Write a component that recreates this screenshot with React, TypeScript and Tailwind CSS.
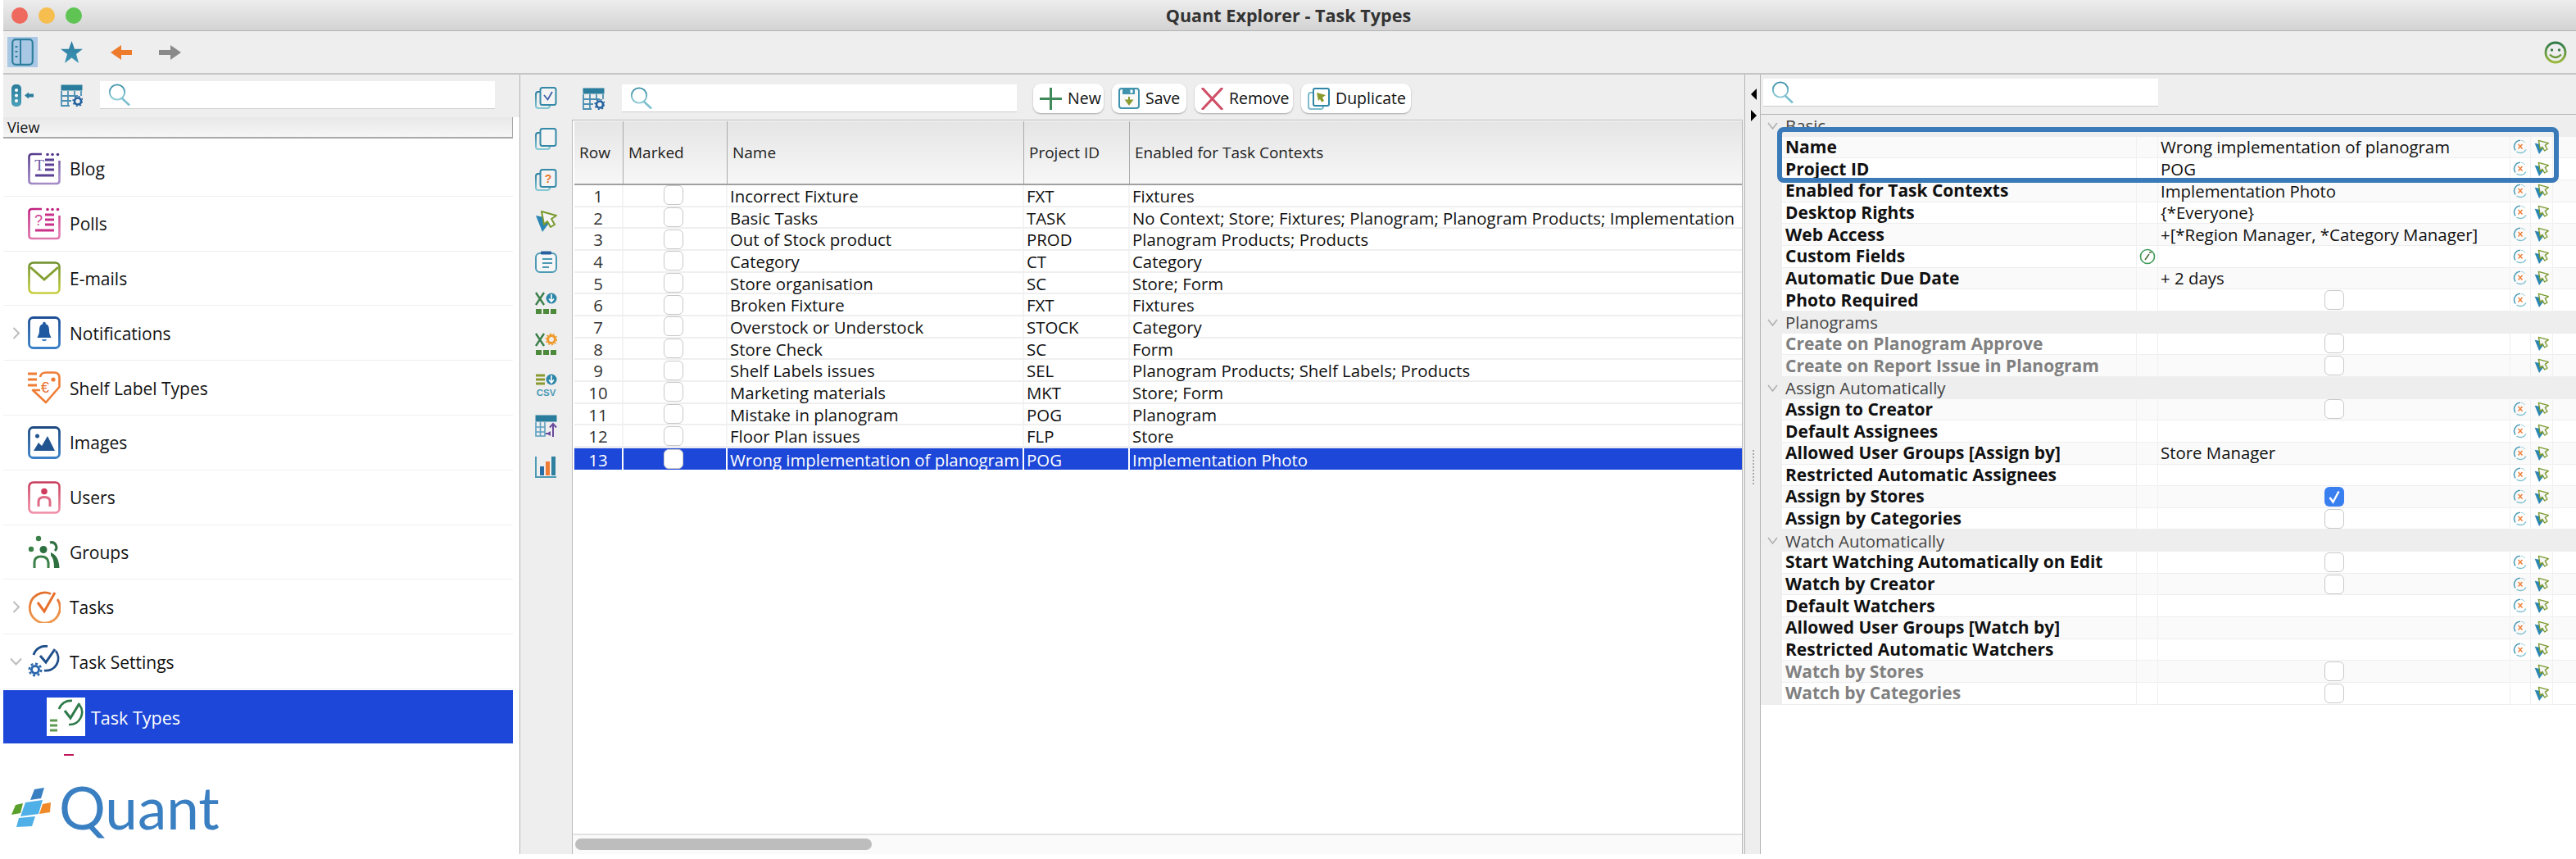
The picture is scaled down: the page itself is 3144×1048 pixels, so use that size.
import React from 'react';

function Grad({ id, a, b, x2 = 0, y2 = 1 }: { id: string; a: string; b: string; x2?: number; y2?: number }) {
  return (
    <linearGradient id={id} x1="0" y1="0" x2={x2} y2={y2}>
      <stop offset="0" stopColor={a} />
      <stop offset="1" stopColor={b} />
    </linearGradient>
  );
}

function Search() {
  return (
    <svg width="27" height="27" viewBox="0 0 27 27" fill="none" className="shrink-0">
      <defs><Grad id="sg" a="#3b8fa8" b="#8ccad6" /></defs>
      <circle cx="11" cy="10.5" r="9.2" stroke="url(#sg)" strokeWidth="1.8" />
      <path d="M17 18 L26 26.5" stroke="#7cc0cf" strokeWidth="2.6" />
    </svg>
  );
}

function SearchBox() {
  return (
    <div className="w-[482px] h-[34px] bg-white border-b border-[#cfcfcf] flex items-center pl-[10px] shrink-0">
      <Search />
    </div>
  );
}

function TableGear({ children }: { children?: React.ReactNode }) {
  return (
    <svg width="27" height="27" viewBox="0 0 27 27" fill="none" className="shrink-0">
      <rect x="0.5" y="0.5" width="26" height="7" fill="#2a7c9c" />
      <path d="M1 8v18h10M1 14h20M1 20h12M9 8v18M17 8v7M25 8v6" stroke="#4a8fb3" strokeWidth="1.8" />
      {children}
      <circle cx="21" cy="20.5" r="4" stroke="#1f5f9e" strokeWidth="2.6" fill="#eee" />
      <circle cx="21" cy="20.5" r="6" stroke="#1f5f9e" strokeWidth="1.4" strokeDasharray="2 2.7" />
    </svg>
  );
}

function PageStack({ children }: { children?: React.ReactNode }) {
  return (
    <svg width="27" height="27" viewBox="0 0 27 27" fill="none">
      <defs><Grad id="ps" a="#2a7f9f" b="#85c8d4" /></defs>
      <rect x="1" y="6" width="17" height="20" rx="3" stroke="url(#ps)" strokeWidth="2" fill="#eee" />
      <rect x="6.5" y="1" width="19" height="21" rx="2.5" stroke="#3489a8" strokeWidth="2" fill="#f4f4f4" />
      {children}
    </svg>
  );
}

function Cursor({ size = 27 }: { size?: number }) {
  return (
    <svg width={size} height={size} viewBox="0 0 27 27" fill="none" className="shrink-0">
      <path d="M1 7 L9 27 L18 15 L11 9 Z" fill="#2c86b4" />
      <path d="M8 2 L26 7 L20 11 L24 18 L19 21 L15 14 L11 18 Z" fill="#f6f6f6" stroke="#7a9a2e" strokeWidth="2" strokeLinejoin="round" />
    </svg>
  );
}

function Reset() {
  return (
    <svg width="18" height="18" viewBox="0 0 18 18" fill="none" className="shrink-0">
      <path d="M9 1.2 A7.8 7.8 0 0 0 3 13.5" stroke="#4a9ab5" strokeWidth="1.5" />
      <path d="M4.5 15 A7.8 7.8 0 0 0 16 12.5" stroke="#7fc0cf" strokeWidth="1.5" />
      <path d="M6.5 6 L11.5 11.5 M11.5 6 L6.5 11.5" stroke="#ef7d35" strokeWidth="1.4" />
      <path d="M10 1.3 A7.8 7.8 0 0 1 15 4" stroke="#9fd0da" strokeWidth="1" />
    </svg>
  );
}

function ExcelBars() {
  return (
    <g fill="#4e8a3c">
      <rect x="1" y="21" width="7" height="6" />
      <rect x="10" y="21" width="7" height="6" />
      <rect x="19" y="21" width="7" height="6" />
    </g>
  );
}

const stripIcons: React.ReactNode[] = [
  <PageStack key="a"><path d="M11 10 L15.5 15.5 L21 6" stroke="#3d5fa8" strokeWidth="1.8" /></PageStack>,
  <PageStack key="b" />,
  <PageStack key="c"><text x="16" y="17" textAnchor="middle" fontSize="14" fontWeight="700" fill="#e8762c" fontFamily="'Liberation Sans',sans-serif">?</text></PageStack>,
  <Cursor key="d" />,
  <svg key="e" width="27" height="27" viewBox="0 0 27 27" fill="none">
    <rect x="1" y="3" width="25" height="23" rx="5" stroke="#4a9ab5" strokeWidth="2" fill="#f6f6f6" />
    <rect x="7" y="0.5" width="13" height="4" rx="1" fill="#2a5f9f" />
    <path d="M9 10h12M9 15h12M9 20h8" stroke="#4a9ab5" strokeWidth="2" />
  </svg>,
  <svg key="f" width="27" height="27" viewBox="0 0 27 27" fill="none">
    <path d="M1 1 L11 16 M11 1 L1 16" stroke="#3b7f4a" strokeWidth="2.4" />
    <circle cx="20" cy="8" r="6.5" fill="#2c86a8" />
    <path d="M20 3v8M17 8.5l3 3.5 3-3.5" stroke="#fff" strokeWidth="1.6" />
    <ExcelBars />
  </svg>,
  <svg key="g" width="27" height="27" viewBox="0 0 27 27" fill="none">
    <path d="M1 1 L11 16 M11 1 L1 16" stroke="#3b7f4a" strokeWidth="2.4" />
    <circle cx="20" cy="8" r="4.4" stroke="#ef9a2c" strokeWidth="3" />
    <circle cx="20" cy="8" r="6.6" stroke="#ef9a2c" strokeWidth="1.6" strokeDasharray="2 2.1" />
    <ExcelBars />
  </svg>,
  <svg key="h" width="27" height="27" viewBox="0 0 27 27" fill="none">
    <path d="M1 2h11M1 7h11M1 12h11" stroke="#8a9a2e" strokeWidth="3" />
    <circle cx="20" cy="7" r="6.5" fill="#2c86a8" />
    <path d="M20 2v8M17 7.5l3 3.5 3-3.5" stroke="#fff" strokeWidth="1.6" />
    <text x="13.5" y="26.5" textAnchor="middle" fontSize="11.5" fontWeight="700" fill="#4a9ab5" fontFamily="'Liberation Sans',sans-serif">CSV</text>
  </svg>,
  <svg key="i" width="27" height="27" viewBox="0 0 27 27" fill="none">
    <rect x="0.5" y="0.5" width="26" height="8" fill="#2a7c9c" />
    <path d="M1 9v17h11V9M1 15h11M1 21h11M6.5 9v17" stroke="#5a9fc0" strokeWidth="1.6" />
    <path d="M22 27V12M18 15.5l4-4.5 4 4.5M13 23h6" stroke="#6a4a9c" strokeWidth="2" />
    <path d="M19 20l-5 3 5 3z" fill="#6a4a9c" />
  </svg>,
  <svg key="j" width="27" height="27" viewBox="0 0 27 27" fill="none">
    <path d="M1 1v25h25" stroke="#4a9ab5" strokeWidth="2" />
    <rect x="6" y="13" width="5" height="11" fill="#2a6ea8" />
    <rect x="13" y="7" width="5" height="17" fill="#ef7d35" />
    <rect x="20" y="1" width="5" height="23" fill="#2f7f9f" />
  </svg>,
];

/* Tree icons, 40 x 40 */
function FramedDoc({ c1, c2, id, children }: { c1: string; c2: string; id: string; children: React.ReactNode }) {
  return (
    <svg width="40" height="40" viewBox="0 0 40 40" fill="none">
      <defs><Grad id={id} a={c1} b={c2} x2={0.3} /></defs>
      <path d="M17 2H5Q1.5 2 1.5 5.5V34.5Q1.5 38 5 38H35Q38.5 38 38.5 34.5V10" stroke={`url(#${id})`} strokeWidth="2.6" />
      <circle cx="24" cy="2.5" r="1.8" fill={c1} />
      <circle cx="30" cy="2.5" r="1.8" fill={c1} />
      <circle cx="36.5" cy="2.5" r="1.8" fill={c1} />
      {children}
    </svg>
  );
}

const treeIcons: Record<string, React.ReactNode> = {
  Blog: (
    <FramedDoc id="blog" c1="#54388c" c2="#a48cc8">
      <text x="14" y="22" textAnchor="middle" fontSize="19" fontFamily="'Liberation Serif',serif" fill="#6a559f">T</text>
      <path d="M21 9h11M21 15h11M21 21h11M9 28h23" stroke="#5b4196" strokeWidth="2.8" />
    </FramedDoc>
  ),
  Polls: (
    <FramedDoc id="polls" c1="#c01f80" c2="#e078b0">
      <text x="13" y="22" textAnchor="middle" fontSize="18" fontFamily="'Liberation Sans',sans-serif" fill="#d03d90">?</text>
      <path d="M21 9h11M21 15h11M21 21h11M9 28h23" stroke="#c83088" strokeWidth="2.8" />
    </FramedDoc>
  ),
  'E-mails': (
    <svg width="40" height="40" viewBox="0 0 40 40" fill="none">
      <defs><Grad id="mail" a="#6d8f2a" b="#c8d040" /></defs>
      <rect x="1.5" y="1.5" width="37" height="37" rx="5" stroke="url(#mail)" strokeWidth="2.6" />
      <path d="M3 7 L20 22 L37 7" stroke="#84a032" strokeWidth="3" />
    </svg>
  ),
  Notifications: (
    <svg width="40" height="40" viewBox="0 0 40 40" fill="none">
      <defs><Grad id="noti" a="#1c4f94" b="#3a80c8" /></defs>
      <rect x="1.5" y="1.5" width="37" height="37" rx="5" stroke="url(#noti)" strokeWidth="2.8" />
      <path d="M20 9c-5 0-6 4-6 8 0 5-2 7-2.500 9h17c-.5-2-2.500-4-2.500-9 0-4-1-8-6-8z" fill="#1f5aa0" />
      <circle cx="20" cy="8.500" r="1.800" fill="#1f5aa0" />
      <path d="M17 28h6c0 3-6 3-6 0z" fill="#3a80c8" />
    </svg>
  ),
  'Shelf Label Types': (
    <svg width="40" height="40" viewBox="0 0 40 40" fill="none">
      <path d="M0 3h11M0 10h11M0 17h11" stroke="#ef7d35" strokeWidth="3" />
      <path d="M15 7 Q16 1.500 22 1.500H32Q38.500 1.500 38.500 8V19L22 38 6 23h9" stroke="#ef7d35" strokeWidth="2.6" strokeLinejoin="round" />
      <circle cx="31" cy="10" r="2.600" fill="#ef7d35" />
      <text x="21" y="26" textAnchor="middle" fontSize="18" fontFamily="'Liberation Sans',sans-serif" fill="#e8702c">€</text>
    </svg>
  ),
  Images: (
    <svg width="40" height="40" viewBox="0 0 40 40" fill="none">
      <defs><Grad id="img" a="#1c4a80" b="#3a80c8" /></defs>
      <rect x="1.500" y="1.500" width="37" height="37" rx="5" stroke="url(#img)" strokeWidth="2.800" />
      <circle cx="11.500" cy="12" r="2.500" fill="#22558f" />
      <path d="M7 30L13 20l4 4 7-12 9 18z" fill="#22558f" />
    </svg>
  ),
  Users: (
    <svg width="40" height="40" viewBox="0 0 40 40" fill="none">
      <defs><Grad id="usr" a="#c83c5c" b="#f090a8" /></defs>
      <rect x="1.500" y="1.500" width="37" height="37" rx="5" stroke="url(#usr)" strokeWidth="2.600" />
      <circle cx="20" cy="12.500" r="3.800" fill="#cf3c5e" />
      <path d="M13 31V25Q13 19.500 20 19.500T27 25V31" stroke="#de6a85" strokeWidth="3" />
    </svg>
  ),
  Groups: (
    <svg width="40" height="40" viewBox="0 0 40 40" fill="none">
      <circle cx="13" cy="4" r="3.200" fill="#3b8048" />
      <circle cx="4" cy="17" r="3.200" fill="#3b8048" />
      <circle cx="19" cy="17.500" r="4.500" fill="#2e6f40" />
      <path d="M27 9a6 6 0 0 1 6 10" stroke="#2e6f40" strokeWidth="3" />
      <path d="M8 40V33Q8 26 16 26T25 33V40" stroke="#3b8048" strokeWidth="3" />
      <path d="M28 21 Q38 25 38.500 40H32Q32 28 28 25z" fill="#2e6f40" />
    </svg>
  ),
  Tasks: (
    <svg width="40" height="40" viewBox="0 0 40 40" fill="none">
      <defs><Grad id="tsk" a="#e2702c" b="#f09a50" /></defs>
      <path d="M28 4.500 A18.500 18.500 0 1 0 36 11" stroke="url(#tsk)" strokeWidth="2.800" />
      <path d="M12 15 L20 26 L33 3" stroke="#e8702c" strokeWidth="3" />
    </svg>
  ),
  'Task Settings': (
    <svg width="40" height="40" viewBox="0 0 40 40" fill="none">
      <path d="M7 12 A15 15 0 0 1 24 1.500" stroke="#1f4f8a" strokeWidth="2.800" />
      <path d="M34 7 A15 15 0 0 1 20 31" stroke="#1f4f8a" strokeWidth="2.800" />
      <path d="M15 13 L22 21 L33 5" stroke="#1f4f8a" strokeWidth="3" />
      <circle cx="9" cy="30" r="4.500" stroke="#2c68ad" strokeWidth="3" />
      <circle cx="9" cy="30" r="7.300" stroke="#2c68ad" strokeWidth="2.400" strokeDasharray="3 2.700" />
    </svg>
  ),
};

function TaskTypesIcon() {
  return (
    <div className="w-[47px] h-[47px] bg-white flex items-center justify-center shrink-0">
      <svg width="42" height="42" viewBox="0 0 42 42" fill="none">
        <path d="M12 12 A15 15 0 0 1 28 2" stroke="#2e7a4a" strokeWidth="2.600" />
        <path d="M37 7 A15 15 0 0 1 24 31" stroke="#2e7a4a" strokeWidth="2.600" />
        <path d="M19 14 L26 23 L37 5" stroke="#2e7a4a" strokeWidth="3" />
        <path d="M1 26h9M1 32h9M1 38h9" stroke="#5f9a50" strokeWidth="3.200" />
      </svg>
    </div>
  );
}

const treeRows: { label: string; arrow?: 'r' | 'd' }[] = [
  { label: 'Blog' },
  { label: 'Polls' },
  { label: 'E-mails' },
  { label: 'Notifications', arrow: 'r' },
  { label: 'Shelf Label Types' },
  { label: 'Images' },
  { label: 'Users' },
  { label: 'Groups' },
  { label: 'Tasks', arrow: 'r' },
  { label: 'Task Settings', arrow: 'd' },
];

const tableRows = [
  ['Incorrect Fixture', 'FXT', 'Fixtures'],
  ['Basic Tasks', 'TASK', 'No Context; Store; Fixtures; Planogram; Planogram Products; Implementation'],
  ['Out of Stock product', 'PROD', 'Planogram Products; Products'],
  ['Category', 'CT', 'Category'],
  ['Store organisation', 'SC', 'Store; Form'],
  ['Broken Fixture', 'FXT', 'Fixtures'],
  ['Overstock or Understock', 'STOCK', 'Category'],
  ['Store Check', 'SC', 'Form'],
  ['Shelf Labels issues', 'SEL', 'Planogram Products; Shelf Labels; Products'],
  ['Marketing materials', 'MKT', 'Store; Form'],
  ['Mistake in planogram', 'POG', 'Planogram'],
  ['Floor Plan issues', 'FLP', 'Store'],
  ['Wrong implementation of planogram', 'POG', 'Implementation Photo'],
];

type Prop = { section?: boolean; label: string; value?: string; check?: 'off' | 'on'; disabled?: boolean; custom?: boolean };

const props: Prop[] = [
  { section: true, label: 'Basic' },
  { label: 'Name', value: 'Wrong implementation of planogram' },
  { label: 'Project ID', value: 'POG' },
  { label: 'Enabled for Task Contexts', value: 'Implementation Photo' },
  { label: 'Desktop Rights', value: '{*Everyone}' },
  { label: 'Web Access', value: '+[*Region Manager, *Category Manager]' },
  { label: 'Custom Fields', custom: true },
  { label: 'Automatic Due Date', value: '+ 2 days' },
  { label: 'Photo Required', check: 'off' },
  { section: true, label: 'Planograms' },
  { label: 'Create on Planogram Approve', check: 'off', disabled: true },
  { label: 'Create on Report Issue in Planogram', check: 'off', disabled: true },
  { section: true, label: 'Assign Automatically' },
  { label: 'Assign to Creator', check: 'off' },
  { label: 'Default Assignees' },
  { label: 'Allowed User Groups [Assign by]', value: 'Store Manager' },
  { label: 'Restricted Automatic Assignees' },
  { label: 'Assign by Stores', check: 'on' },
  { label: 'Assign by Categories', check: 'off' },
  { section: true, label: 'Watch Automatically' },
  { label: 'Start Watching Automatically on Edit', check: 'off' },
  { label: 'Watch by Creator', check: 'off' },
  { label: 'Default Watchers' },
  { label: 'Allowed User Groups [Watch by]' },
  { label: 'Restricted Automatic Watchers' },
  { label: 'Watch by Stores', check: 'off', disabled: true },
  { label: 'Watch by Categories', check: 'off', disabled: true },
];

function Checkbox({ on }: { on?: boolean }) {
  if (on) {
    return (
      <div className="w-[24px] h-[24px] rounded-[6px] bg-[#3a7ff0] flex items-center justify-center">
        <svg width="16" height="18" viewBox="0 0 16 18" fill="none">
          <path d="M2.500 10 L6.500 15.500 L13.500 2.500" stroke="#fff" strokeWidth="2.400" />
        </svg>
      </div>
    );
  }
  return <div className="w-[24px] h-[24px] rounded-[6px] bg-white border border-[#c8c8c8]" />;
}

function ToolButton({ w, icon, label }: { w: string; icon: React.ReactNode; label: string }) {
  return (
    <div className={`${w} h-[36px] bg-white rounded-[9px] shadow-[0_1px_2px_rgba(0,0,0,0.3)] flex items-center pl-[8px] gap-[7px] shrink-0`}>
      {icon}
      <span className="text-[19.5px] leading-none text-[#111]">{label}</span>
    </div>
  );
}

function TreeRow({ label, arrow }: { label: string; arrow?: 'r' | 'd' }) {
  return (
    <div className="h-[66.8px] border-b border-[#efefef] flex items-center">
      <div className="w-[30px] flex justify-center pl-[1px] shrink-0">
        {arrow === 'r' && (
          <svg width="10" height="15" viewBox="0 0 10 15" fill="none"><path d="M1.500 1 L8 7.500 L1.500 14" stroke="#bdbdbd" strokeWidth="2" /></svg>
        )}
        {arrow === 'd' && (
          <svg width="15" height="10" viewBox="0 0 15 10" fill="none"><path d="M1 1.500 L7.500 8.500 L14 1.500" stroke="#bdbdbd" strokeWidth="2" /></svg>
        )}
      </div>
      {treeIcons[label]}
      <span className="ml-[11px] pt-[2px] text-[21px] leading-none text-[#111]">{label}</span>
    </div>
  );
}

function LeftPanel() {
  return (
    <div className="w-[631px] shrink-0 border-r border-[#b4b4b4] bg-white flex flex-col">
      <div className="h-[52px] bg-[#eeeeee] flex items-start pt-[8px] pl-[10px]">
        <svg width="27" height="27" viewBox="0 0 27 27" fill="none" className="mt-[4px] shrink-0">
          <defs><Grad id="pill" a="#2a7c9c" b="#4aa0b8" /></defs>
          <rect x="0" y="0" width="12" height="27" rx="5" fill="url(#pill)" />
          <circle cx="6" cy="7" r="2" fill="#fff" />
          <circle cx="6" cy="13.500" r="2" fill="#fff" />
          <circle cx="6" cy="20" r="2" fill="#fff" />
          <path d="M16 13.500 L21 9.500 V11.500 H27 V15.500 H21 V17.500 Z" fill="#2a7c9c" />
        </svg>
        <div className="ml-[33px] mt-[4px] mr-[21px]"><TableGear /></div>
        <SearchBox />
      </div>
      <div className="h-[26px] w-[622px] bg-gradient-to-b from-[#e8e8e8] to-[#f6f6f6] border-b-2 border-r border-[#a9a9a9] flex items-center pl-[5px]">
        <span className="text-[18px] leading-none text-[#111]">View</span>
      </div>
      <div className="w-[622px] flex flex-col pt-[4px] flex-1">
        {treeRows.map((r) => <TreeRow key={r.label} label={r.label} arrow={r.arrow} />)}
        <div className="h-[65px] mt-[1px] bg-[#1c47d8] flex items-center pl-[53px] shrink-0">
          <TaskTypesIcon />
          <span className="ml-[7px] pt-[2px] text-[21.5px] leading-none text-white">Task Types</span>
        </div>
        <div className="mt-[13px] ml-[74px] w-[12px] h-[2px] bg-[#c2185b]" />
        <div className="mt-[38px] pl-[10px] flex items-center">
          <svg width="48" height="48" viewBox="0 0 48 48" fill="none">
            <path d="M28 2 L40 0 L36 13 L23 15 Z" fill="#3a7fc1" />
            <path d="M5 21 L14 19 L11 31 L0 33 Z" fill="#5aa02c" />
            <path d="M17 18 L38 15 L33 32 L11 35 Z" fill="#4fb0e8" />
            <path d="M38 20 L48 18 L47 30 L34 32 Z" fill="#f08a28" />
            <path d="M9 37 L29 35 L25 47 L6 48 Z" fill="#4fb0e8" />
          </svg>
          <span className="ml-[10px] text-[71px] leading-[50px] text-[#3a7fc1] font-['Lato',sans-serif]">Quant</span>
        </div>
      </div>
    </div>
  );
}

function MiddlePanel() {
  return (
    <div className="w-[1495px] shrink-0 border-r border-[#b4b4b4] flex">
      <div className="w-[62px] shrink-0 bg-[#eeeeee] flex flex-col items-center pt-[15px] gap-[23px]">
        {stripIcons.map((ic, i) => <div key={i} className="w-[27px] h-[27px]">{ic}</div>)}
      </div>
      <div className="flex-1 min-w-0 flex flex-col bg-[#eeeeee]">
        <div className="h-[55px] pt-[3px] flex items-center pl-[14px] shrink-0">
          <TableGear />
          <div className="ml-[21px] mr-[20px]"><SearchBox /></div>
          <div className="flex gap-[10px]">
            <ToolButton
              w="w-[86px]"
              label="New"
              icon={
                <svg width="27" height="27" viewBox="0 0 27 27" fill="none" className="shrink-0">
                  <path d="M13.500 0V27M0 13.500H27" stroke="#3f8a58" strokeWidth="3" />
                </svg>
              }
            />
            <ToolButton
              w="w-[91px]"
              label="Save"
              icon={
                <svg width="26" height="26" viewBox="0 0 26 26" fill="none" className="shrink-0">
                  <rect x="1" y="1" width="24" height="24" rx="3" stroke="#3f93ad" strokeWidth="2" fill="#f8f8f8" />
                  <path d="M5 1h15v7H5z" fill="#3f93ad" />
                  <rect x="14.500" y="2.500" width="3" height="4" fill="#fff" />
                  <path d="M13 11v7M9.500 15.500L13 20l3.500-4.500z" stroke="#8a9a2e" strokeWidth="2" fill="#8a9a2e" />
                </svg>
              }
            />
            <ToolButton
              w="w-[120px]"
              label="Remove"
              icon={
                <svg width="27" height="27" viewBox="0 0 27 27" fill="none" className="shrink-0">
                  <path d="M1 0 L26 27 M26 0 L1 27" stroke="#cf5068" strokeWidth="3" />
                </svg>
              }
            />
            <ToolButton
              w="w-[134px]"
              label="Duplicate"
              icon={
                <svg width="27" height="27" viewBox="0 0 27 27" fill="none" className="shrink-0">
                  <rect x="1" y="6" width="18" height="20" rx="3" stroke="#7fbccb" strokeWidth="2" fill="#fff" />
                  <rect x="7" y="1" width="19" height="21" rx="2" stroke="#2f86a8" strokeWidth="2" fill="#fff" />
                  <path d="M11 6 L22 9 L18 12 L20 16 L17 17.500 L15 14 L13 16 Z" fill="#8a9a2e" />
                </svg>
              }
            />
          </div>
        </div>
        <div className="flex-1 min-h-0 mr-[2px] ml-[1px] bg-white border-t border-x border-[#b8b8b8] pt-[1px] pl-[2px] flex flex-col">
          <div className="h-[78px] grid grid-cols-[60px_127px_362px_129px_1fr] bg-gradient-to-b from-[#e5e5e5] to-[#f7f7f7] border-b-2 border-[#a0a0a0] text-[19px] leading-none text-[#222] shrink-0">
            {['Row', 'Marked', 'Name', 'Project ID', 'Enabled for Task Contexts'].map((h, i) => (
              <div key={h} className={`flex items-center pl-[6px] ${i < 4 ? 'border-r border-[#aaaaaa]' : ''}`}>{h}</div>
            ))}
          </div>
          <div className="flex-1 min-h-0">
            {tableRows.map((r, i) => {
              const sel = i === 12;
              return (
                <div
                  key={i}
                  className={`h-[26.67px] grid grid-cols-[60px_127px_362px_129px_1fr] text-[20.4px] leading-none ${sel ? 'bg-[#1c47d8] text-white border-t border-[#e4e8f8]' : 'border-b-2 border-[#efefef] text-[#111]'}`}
                >
                  <div className={`flex items-center justify-center pt-[2px] border-r-2 ${sel ? 'border-white text-white' : 'border-[#f4f4f4] text-[#333]'}`}>{i + 1}</div>
                  <div className={`flex items-center justify-center pr-[3px] border-r-2 ${sel ? 'border-white' : 'border-[#f4f4f4]'}`}><Checkbox /></div>
                  <div className={`flex items-center pl-[3px] pt-[2px] border-r-2 whitespace-nowrap ${sel ? 'border-white' : 'border-[#f4f4f4]'}`}>{r[0]}</div>
                  <div className={`flex items-center pl-[3px] pt-[2px] border-r-2 ${sel ? 'border-white' : 'border-[#f4f4f4]'}`}>{r[1]}</div>
                  <div className="flex items-center pl-[3px] pt-[2px] whitespace-nowrap">{r[2]}</div>
                </div>
              );
            })}
          </div>
          <div className="h-[25px] -ml-[2px] bg-[#fafafa] border-t-2 border-[#e2e2e2] pt-[4px] pl-[3px] shrink-0">
            <div className="w-[362px] h-[14px] rounded-full bg-[#bdbdbd]" />
          </div>
        </div>
      </div>
    </div>
  );
}

function Splitter() {
  return (
    <div className="w-[18px] shrink-0 bg-[#eeeeee] flex flex-col items-center pt-[17px] pl-[2px]">
      <div className="w-0 h-0 border-y-[7px] border-y-transparent border-r-[7px] border-r-black" />
      <div className="w-0 h-0 mt-[12px] border-y-[7px] border-y-transparent border-l-[7px] border-l-black" />
      <div className="h-[42px] mt-[401px] border-l-2 border-dotted border-[#aaaaaa]" />
    </div>
  );
}

function PropRow({ p, idx }: { p: Prop; idx: number }) {
  if (p.section) {
    return (
      <div className="h-[26.67px] bg-[#eeeeee] flex items-center text-[20.4px] leading-none text-[#444]">
        <div className="w-[26px] flex justify-center pl-[3px]">
          <svg width="13" height="9" viewBox="0 0 13 9" fill="none"><path d="M1 1 L6.500 8 L12 1" stroke="#b0b0b0" strokeWidth="1.600" /></svg>
        </div>
        <span className="pl-[4px]">{p.label}</span>
      </div>
    );
  }
  const alt = idx % 2 === 1;
  return (
    <div className={`h-[26.67px] grid grid-cols-[26px_432px_27px_429px_26px_27px_1fr] text-[20.4px] leading-none ${alt ? 'bg-[#fafafa]' : 'bg-white'}`}>
      <div className="bg-[#eeeeee]" />
      <div className={`flex items-center pl-[4px] border-b border-[#eeeeee] text-[21px] font-bold whitespace-nowrap ${p.disabled ? 'text-[#808080]' : 'text-[#111]'}`}>{p.label}</div>
      <div className="flex items-center justify-center border-x border-b border-[#f0f0f0]">
        {p.custom && (
          <svg width="20" height="20" viewBox="0 0 20 20" fill="none">
            <circle cx="10" cy="10" r="8.500" stroke="#3f9a5a" strokeWidth="1.600" />
            <path d="M7 14 L12 7 M12 5h3" stroke="#4a6a3a" strokeWidth="1.600" />
          </svg>
        )}
      </div>
      <div className="flex items-center justify-center border-b border-[#eeeeee] whitespace-nowrap text-[#111]">
        {p.check ? <Checkbox on={p.check === 'on'} /> : <span className="w-full pl-[3px]">{p.value}</span>}
      </div>
      <div className="flex items-center justify-center border-x border-b border-[#f0f0f0]">{!p.disabled && <Reset />}</div>
      <div className="flex items-center justify-center border-r border-b border-[#f0f0f0]"><Cursor size={18} /></div>
      <div className="border-b border-[#eeeeee]" />
    </div>
  );
}

function RightPanel() {
  return (
    <div className="flex-1 min-w-0 border-l border-[#b4b4b4] flex flex-col bg-white">
      <div className="h-[49px] bg-[#eeeeee] border-b border-[#b4b4b4] pt-[5px] pl-[3px] shrink-0">
        <SearchBox />
      </div>
      <div className="relative">
        {props.map((p, i) => <PropRow key={p.label} p={p} idx={i} />)}
        <div className="absolute left-[20px] top-[15px] w-[954px] h-[68px] border-[6px] border-[#3a7ab8] rounded-[8px]" />
      </div>
    </div>
  );
}

export default function App() {
  return (
    <div className="w-[3144px] h-[1048px] overflow-hidden bg-white pl-[4px] pb-[6px] flex flex-col font-['Open_Sans',sans-serif]">
      <div className="h-[38px] shrink-0 bg-gradient-to-b from-[#ededed] to-[#d3d3d3] border-b border-[#b4b4b4] grid grid-cols-[1fr_auto_1fr] items-center">
        <div className="flex pl-[10px] gap-[13px]">
          <div className="w-[20px] h-[20px] rounded-full bg-[#ef6a5e]" />
          <div className="w-[20px] h-[20px] rounded-full bg-[#f6bd4f]" />
          <div className="w-[20px] h-[20px] rounded-full bg-[#5fc454]" />
        </div>
        <div className="text-[21.6px] leading-none font-bold text-[#333] mr-[3px]">Quant Explorer - Task Types</div>
        <div />
      </div>
      <div className="h-[53px] shrink-0 bg-[#eeeeee] border-b-2 border-[#c4c4c4] flex items-center pl-[5px] pr-[11px]">
        <div className="w-[37px] h-[37px] bg-[#a8c8e6] flex items-center justify-center">
          <svg width="27" height="33" viewBox="0 0 27 33" fill="none">
            <rect x="1.200" y="1.200" width="24.600" height="30.600" rx="4" stroke="#2f7f9c" strokeWidth="2.200" />
            <path d="M11 2V31" stroke="#2f7f9c" strokeWidth="2" />
            <path d="M6 9v2M6 15v2M6 21v2" stroke="#2f7f9c" strokeWidth="3" />
          </svg>
        </div>
        <svg width="27" height="27" viewBox="0 0 27 27" className="ml-[28px]">
          <defs><Grad id="star" a="#2a7ca0" b="#3f94b4" /></defs>
          <path d="M13.500 0 L17 9.800 H27 L19 16 L22 27 L13.500 20.500 L5 27 L8 16 L0 9.800 H10 Z" fill="url(#star)" />
        </svg>
        <svg width="26" height="18" viewBox="0 0 26 18" className="ml-[34px]">
          <path d="M0 9 L13 0 V6 H26 V12 H13 V18 Z" fill="#ee7a2c" />
        </svg>
        <svg width="27" height="18" viewBox="0 0 27 18" className="ml-[33px]">
          <path d="M27 9 L14 0 V6 H0 V12 H14 V18 Z" fill="#8a8a8a" />
        </svg>
        <svg width="28" height="28" viewBox="0 0 28 28" fill="none" className="ml-auto">
          <defs><Grad id="smile" a="#2e7a4a" b="#9ab83c" /></defs>
          <circle cx="14" cy="14" r="12" stroke="url(#smile)" strokeWidth="2.800" />
          <circle cx="9.500" cy="11" r="1.700" fill="#3a7a4a" />
          <circle cx="18.500" cy="11" r="1.700" fill="#3a7a4a" />
          <path d="M7 16.500 Q14 23.500 21 16.500" stroke="#6a9a3c" strokeWidth="2.400" />
        </svg>
      </div>
      <div className="flex-1 min-h-0 flex">
        <LeftPanel />
        <MiddlePanel />
        <Splitter />
        <RightPanel />
      </div>
    </div>
  );
}
